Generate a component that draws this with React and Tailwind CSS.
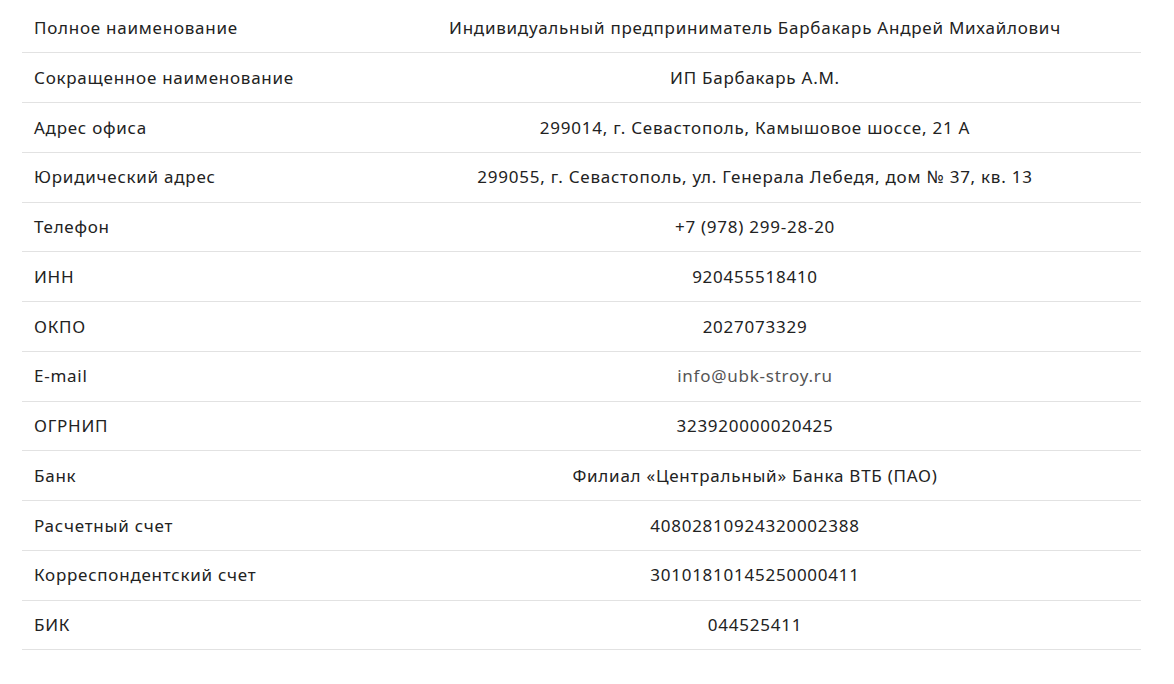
import React from 'react';

const rows = [
    ['Полное наименование', 'Индивидуальный предприниматель Барбакарь Андрей Михайлович'],
    ['Сокращенное наименование', 'ИП Барбакарь А.М.'],
    ['Адрес офиса', '299014, г. Севастополь, Камышовое шоссе, 21 А'],
    ['Юридический адрес', '299055, г. Севастополь, ул. Генерала Лебедя, дом № 37, кв. 13'],
    ['Телефон', '+7 (978) 299-28-20'],
    ['ИНН', '920455518410'],
    ['ОКПО', '2027073329'],
    ['E-mail', 'info@ubk-stroy.ru', true],
    ['ОГРНИП', '323920000020425'],
    ['Банк', 'Филиал «Центральный» Банка ВТБ (ПАО)'],
    ['Расчетный счет', '40802810924320002388'],
    ['Корреспондентский счет', '30101810145250000411'],
    ['БИК', '044525411'],
];

const App = () => {
    return (
        <div className="min-h-[684px] bg-white pt-[3.5px]" style={{ fontFamily: '"Noto Sans", "Open Sans", sans-serif' }}>
            <div className="ml-[22px] w-[1119px]">
                {rows.map(([label, value, isLink]) => (
                    <div key={label} className="grid grid-cols-[347px_1fr] items-center h-[49.75px] border-b border-[#e2e2e2] text-[17px] tracking-[0.75px] text-[#222]">
                        <div className="pl-[12px]">{label}</div>
                        <div className={`text-center ${isLink ? 'text-[#555]' : ''}`}>{value}</div>
                    </div>
                ))}
            </div>
        </div>
    );
};

export default App;
